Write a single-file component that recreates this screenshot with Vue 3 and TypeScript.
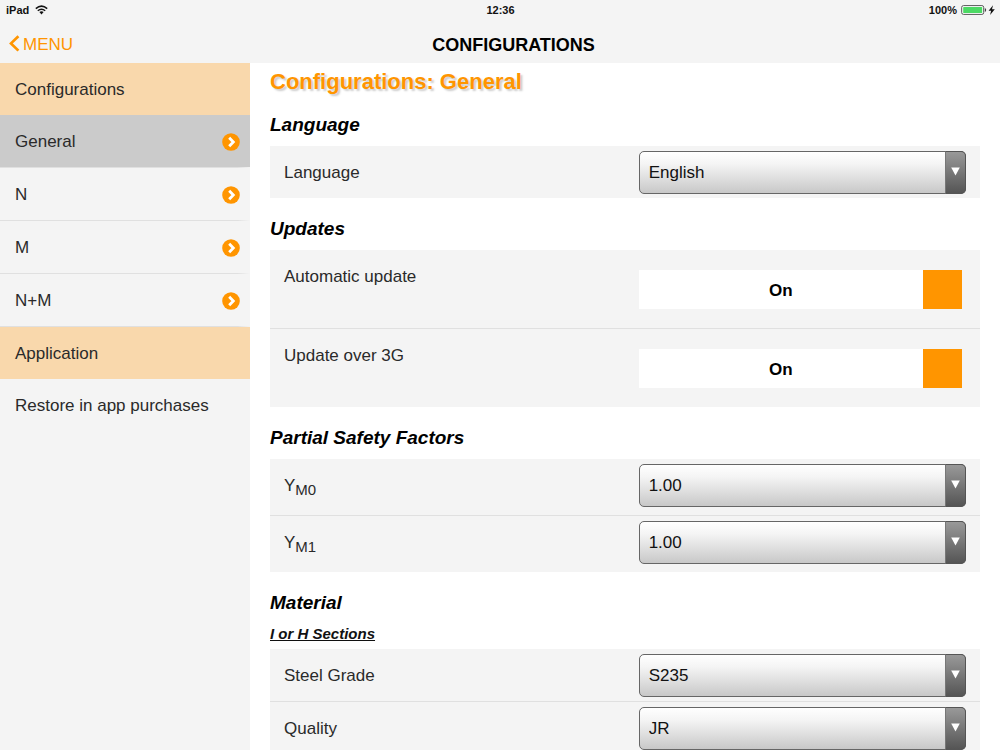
<script setup lang="ts">
import { reactive, ref } from 'vue'

interface SelectRow {
  kind: 'select'
  id: string
  label: string
  sub?: string
  value: string
  options: string[]
  tall?: boolean
}
interface SwitchRow {
  kind: 'switch'
  id: string
  label: string
  on: boolean
}
interface Section {
  heading: string
  subheading?: string
  rows: (SelectRow | SwitchRow)[]
}

const menu = ['General', 'N', 'M', 'N+M']
const active = ref('General')

const factors = ['1.00', '1.05', '1.10']

const sections = reactive<Section[]>([
  {
    heading: 'Language',
    rows: [
      { kind: 'select', id: 'language', label: 'Language', value: 'English', options: ['English', 'Français', 'Deutsch'] },
    ],
  },
  {
    heading: 'Updates',
    rows: [
      { kind: 'switch', id: 'auto-update', label: 'Automatic update', on: true },
      { kind: 'switch', id: 'update-3g', label: 'Update over 3G', on: true },
    ],
  },
  {
    heading: 'Partial Safety Factors',
    rows: [
      { kind: 'select', id: 'ym0', label: 'Y', sub: 'M0', value: '1.00', options: factors, tall: true },
      { kind: 'select', id: 'ym1', label: 'Y', sub: 'M1', value: '1.00', options: factors, tall: true },
    ],
  },
  {
    heading: 'Material',
    subheading: 'I or H Sections',
    rows: [
      { kind: 'select', id: 'grade', label: 'Steel Grade', value: 'S235', options: ['S235', 'S275', 'S355'] },
      { kind: 'select', id: 'quality', label: 'Quality', value: 'JR', options: ['JR', 'J0', 'J2'] },
    ],
  },
])
</script>

<template>
  <div class="page">
    <header class="top">
      <div class="status">
        <div class="device">
          <span>iPad</span>
          <svg width="13" height="10" viewBox="0 0 13 10" aria-hidden="true">
            <path d="M0.8 3.6 Q6.5 -1.4 12.2 3.6" fill="none" stroke="#111" stroke-width="1.5" />
            <path d="M2.8 5.8 Q6.5 2.6 10.2 5.8" fill="none" stroke="#111" stroke-width="1.5" />
            <path d="M4.4 7.1 Q6.5 5.5 8.6 7.1 L6.5 9.4 Z" fill="#111" />
          </svg>
        </div>
        <span class="clock">12:36</span>
        <div class="power">
          <span>100%</span>
          <svg width="34" height="10" viewBox="0 0 34 10" aria-hidden="true">
            <rect x="0.7" y="0.6" width="22" height="8.8" rx="1.8" fill="#fff" stroke="#555" stroke-width="1" />
            <rect x="2.2" y="2" width="19" height="6" rx="0.6" fill="#4cd964" />
            <path d="M23.8 3 Q25.2 3.4 25.2 5 Q25.2 6.6 23.8 7 Z" fill="#444" />
            <path d="M32 0.2 L27.6 5.8 H30.1 L29.1 9.9 L33.8 4.2 H31 Z" fill="#111" />
          </svg>
        </div>
      </div>
      <nav class="bar">
        <button type="button" class="back">
          <svg width="11" height="17" viewBox="0 0 11 17" aria-hidden="true">
            <path d="M9.4 1.2 L2 8.4 L9.4 15.6" fill="none" stroke="#ff9500" stroke-width="2.7" />
          </svg>
          <span>MENU</span>
        </button>
        <h1>CONFIGURATIONS</h1>
      </nav>
    </header>

    <div class="body">
      <aside class="side">
        <h2 class="group">Configurations</h2>
        <button
          v-for="item in menu"
          :key="item"
          type="button"
          class="item"
          :class="{ active: item === active }"
          @click="active = item"
        >
          <span>{{ item }}</span>
          <svg width="18" height="18" viewBox="0 0 18 18" aria-hidden="true">
            <circle cx="9" cy="9" r="8.8" fill="#ff9500" />
            <path d="M7.2 4.8 L11.3 9 L7.2 13.2" fill="none" stroke="#fff" stroke-width="2.8" />
          </svg>
        </button>
        <h2 class="group">Application</h2>
        <button type="button" class="item last">Restore in app purchases</button>
      </aside>

      <main class="content">
        <h2 class="title">Configurations: General</h2>
        <section v-for="section in sections" :key="section.heading">
          <h3>{{ section.heading }}</h3>
          <h4 v-if="section.subheading">{{ section.subheading }}</h4>
          <div class="card">
            <div
              v-for="row in section.rows"
              :key="row.id"
              class="row"
              :class="[row.kind, { tall: row.kind === 'select' && row.tall }]"
            >
              <label :for="row.id">{{ row.label }}<sub v-if="row.kind === 'select' && row.sub">{{ row.sub }}</sub></label>
              <div v-if="row.kind === 'select'" class="control">
                <select :id="row.id" v-model="row.value">
                  <option v-for="option in row.options" :key="option">{{ option }}</option>
                </select>
                <span class="arrow">
                  <svg width="9" height="9" viewBox="0 0 9 9" aria-hidden="true">
                    <path d="M0.2 0.5 H8.8 L4.5 8.5 Z" fill="#fff" />
                  </svg>
                </span>
              </div>
              <div v-else class="control">
                <button
                  :id="row.id"
                  type="button"
                  role="switch"
                  class="toggle"
                  :class="{ off: !row.on }"
                  :aria-checked="row.on"
                  @click="row.on = !row.on"
                >
                  <span class="state">{{ row.on ? 'On' : 'Off' }}</span>
                  <span class="knob"></span>
                </button>
              </div>
            </div>
          </div>
        </section>
      </main>
    </div>
  </div>
</template>

<style>
body {
  margin: 0;
  background: #fff;
}
</style>

<style scoped>
.page,
.page * {
  box-sizing: border-box;
}
.page {
  display: flex;
  flex-direction: column;
  height: 100vh;
  overflow: hidden;
  color: #2a2a2a;
  font-family: "Liberation Sans", Arial, sans-serif;
  font-size: 17px;
  line-height: 20px;
}
h1,
h2,
h3,
h4 {
  margin: 0;
}
button {
  border: 0;
  margin: 0;
  padding: 0;
  background: none;
  color: inherit;
  font: inherit;
  cursor: pointer;
}
svg {
  display: block;
  flex: none;
}
.top {
  flex: none;
  background: #f4f4f4;
}
.status {
  display: grid;
  grid-template-columns: 1fr auto 1fr;
  align-items: center;
  height: 20px;
  padding: 0 5px 0 6px;
  color: #111;
  font-size: 11px;
  font-weight: bold;
}
.device,
.power {
  display: flex;
  align-items: center;
  gap: 6px;
}
.power {
  justify-content: flex-end;
  gap: 4px;
}
.bar {
  display: grid;
  grid-template-columns: 1fr auto 1fr;
  align-items: center;
  height: 43px;
  padding: 4px 0 0 27px;
}
.back {
  display: flex;
  align-items: center;
  gap: 3px;
  margin-left: -18px;
  color: #ff9500;
}
.bar h1 {
  color: #000;
  font-size: 18px;
  line-height: 20px;
  padding-top: 2px;
}
.back span {
  padding-top: 2px;
}
.body {
  display: flex;
  flex: 1;
  min-height: 0;
}
.side {
  flex: none;
  width: 25%;
  background: #f4f4f4;
}
.group,
.item {
  display: flex;
  align-items: center;
  justify-content: space-between;
  width: 100%;
  height: 53px;
  padding: 1px 10px 0 15px;
  text-align: left;
}
.group {
  height: 52px;
  padding-top: 2px;
  background: #f9d8ac;
  font-size: 17px;
  font-weight: normal;
}
.item {
  background: linear-gradient(to right, #e0e0e0 95%, #f4f4f4) bottom / 100% 1px no-repeat;
}
.item.active {
  background-color: #cbcbcb;
}
.item.last {
  background: none;
}
.content {
  flex: 1;
  min-width: 0;
  padding: 0 20px;
  overflow-y: auto;
  scrollbar-width: none;
}
.title {
  padding-top: 6px;
  color: #ff9500;
  font-size: 22px;
  line-height: 25px;
  text-shadow: 2px 2px 2px #ccc;
}
h3 {
  padding: 21px 0 11px;
  color: #000;
  font-size: 19px;
  font-style: italic;
}
h4 {
  margin-bottom: 5px;
  color: #111;
  font-size: 15px;
  font-style: italic;
  text-decoration: underline;
}
.card {
  background: #f4f4f4;
}
.row {
  display: flex;
  align-items: flex-start;
  justify-content: space-between;
  padding: 5px 14px 4px;
}
.row + .row {
  border-top: 1px solid #e0e0e0;
}
.row.tall {
  padding-bottom: 8px;
}
.row.switch {
  padding: 20px 14px 19px;
}
label {
  padding-top: 12px;
}
.switch label {
  margin-top: -15px;
}
sub {
  font-size: 15px;
  line-height: 0;
}
.control {
  position: relative;
  width: 48%;
}
select {
  display: block;
  width: 100%;
  height: 43px;
  padding: 0 30px 0 9px;
  border: 1px solid #666;
  border-radius: 5px;
  appearance: none;
  background: linear-gradient(#fff, #f4f4f4 30%, #c8c8c8);
  color: #111;
  font: inherit;
}
.arrow {
  position: absolute;
  top: 0;
  right: 0;
  bottom: 0;
  display: flex;
  justify-content: center;
  width: 21px;
  padding-top: 15px;
  border: 1px solid #555;
  border-left-color: #777;
  border-radius: 0 5px 5px 0;
  background: linear-gradient(#999, #555);
  pointer-events: none;
}
.toggle {
  display: flex;
  align-items: center;
  width: calc(100% - 4px);
  height: 39px;
  background: #fff;
  color: #000;
  font-weight: bold;
}
.toggle.off {
  flex-direction: row-reverse;
}
.state {
  flex: 1;
  padding-top: 3px;
}
.knob {
  width: 39px;
  height: 39px;
  background: #ff9500;
}
.off .knob {
  background: #bbb;
}
</style>
